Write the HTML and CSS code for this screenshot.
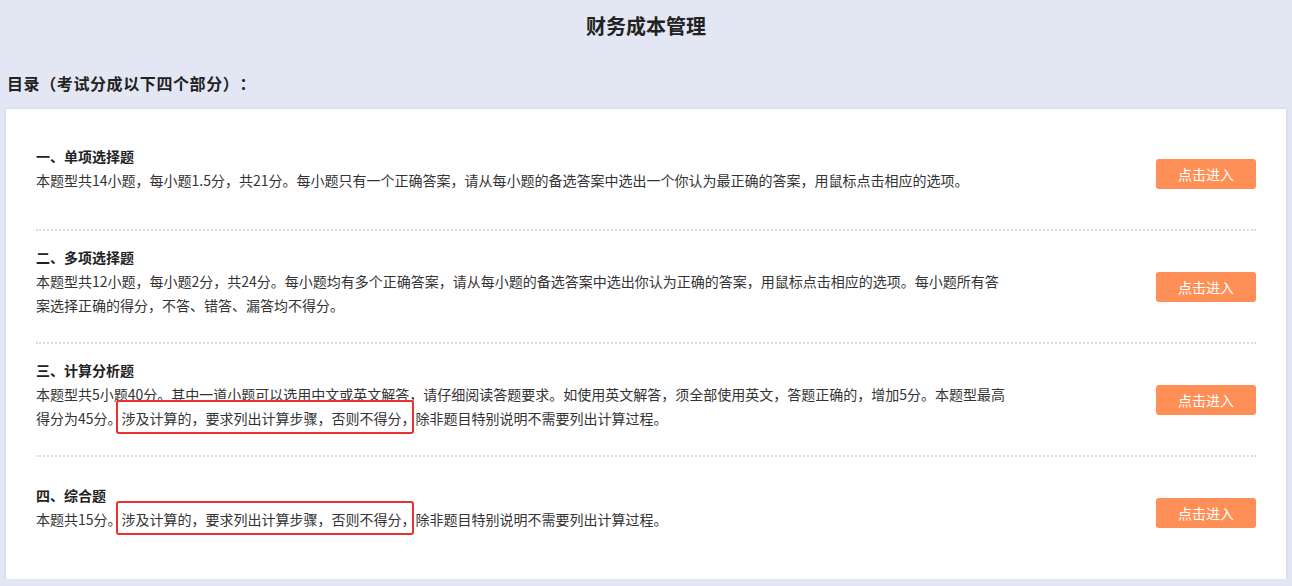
FILE: index.html
```html
<!DOCTYPE html>
<html lang="zh-CN">
<head>
<meta charset="utf-8">
<title>财务成本管理</title>
<link rel="stylesheet" href="styles.css">
</head>
<body>
  <header class="page-header">财务成本管理</header>
  <h2 class="toc-title">目录（考试分成以下四个部分）：</h2>
  <section class="card">
    <div class="part">
      <div class="part-text">
        <div class="part-name">一、单项选择题</div>
        <div class="part-desc">本题型共14小题，每小题1.5分，共21分。每小题只有一个正确答案，请从每小题的备选答案中选出一个你认为最正确的答案，用鼠标点击相应的选项。</div>
      </div>
      <a class="enter-btn">点击进入</a>
    </div>
    <div class="part">
      <div class="part-text">
        <div class="part-name">二、多项选择题</div>
        <div class="part-desc">本题型共12小题，每小题2分，共24分。每小题均有多个正确答案，请从每小题的备选答案中选出你认为正确的答案，用鼠标点击相应的选项。每小题所有答案选择正确的得分，不答、错答、漏答均不得分。</div>
      </div>
      <a class="enter-btn">点击进入</a>
    </div>
    <div class="part">
      <div class="part-text">
        <div class="part-name">三、计算分析题</div>
        <div class="part-desc">本题型共5小题40分。其中一道小题可以选用中文或英文解答，请仔细阅读答题要求。如使用英文解答，须全部使用英文，答题正确的，增加5分。本题型最高得分为45分。<span class="mark">涉及计算的，要求列出计算步骤，否则不得分，</span>除非题目特别说明不需要列出计算过程。</div>
      </div>
      <a class="enter-btn">点击进入</a>
    </div>
    <div class="part">
      <div class="part-text">
        <div class="part-name">四、综合题</div>
        <div class="part-desc">本题共15分。<span class="mark">涉及计算的，要求列出计算步骤，否则不得分，</span>除非题目特别说明不需要列出计算过程。</div>
      </div>
      <a class="enter-btn">点击进入</a>
    </div>
  </section>
</body>
</html>
```

FILE: styles.css
```css
html, body {
  margin: 0;
  padding: 0;
}

body {
  background: #e3e7f3;
  color: #333;
  font-family: "Microsoft YaHei", "Noto Sans CJK SC", sans-serif;
  font-size: 14px;
  text-spacing-trim: space-all;
}

.page-header {
  height: 52px;
  line-height: 52px;
  text-align: center;
  font-size: 20px;
  font-weight: bold;
  color: #222;
}

.toc-title {
  margin: 19px 0 14px 7px;
  font-size: 16px;
  line-height: 24px;
  font-weight: bold;
  color: #222;
  letter-spacing: 0.6px;
}

.card {
  margin: 0 6px;
  padding: 9px 30px 11px;
  background: #fff;
  box-shadow: 0 0 3px rgba(120, 130, 160, 0.25);
}

.part {
  display: flex;
  align-items: center;
  min-height: 111px;
  border-bottom: 2px dotted #dcdcdc;
}

.part:last-child {
  border-bottom: none;
}

.part-text {
  width: 973px;
  padding-bottom: 12px;
}

.part-name {
  font-weight: bold;
  line-height: 24px;
  color: #222;
}

.part-desc {
  line-height: 24px;
}

/* red outline drawn around the scoring rule */
.mark {
  position: relative;
}

.mark::after {
  content: "";
  position: absolute;
  left: -6px;
  right: 2px;
  top: -8px;
  bottom: -6px;
  border: 2px solid #e8302e;
  border-radius: 3px;
  pointer-events: none;
}

.enter-btn {
  margin-left: auto;
  width: 100px;
  height: 30px;
  line-height: 30px;
  text-align: center;
  color: #fff;
  background: #fe8f57;
  border-radius: 3px;
  font-size: 14px;
  cursor: pointer;
}
```
